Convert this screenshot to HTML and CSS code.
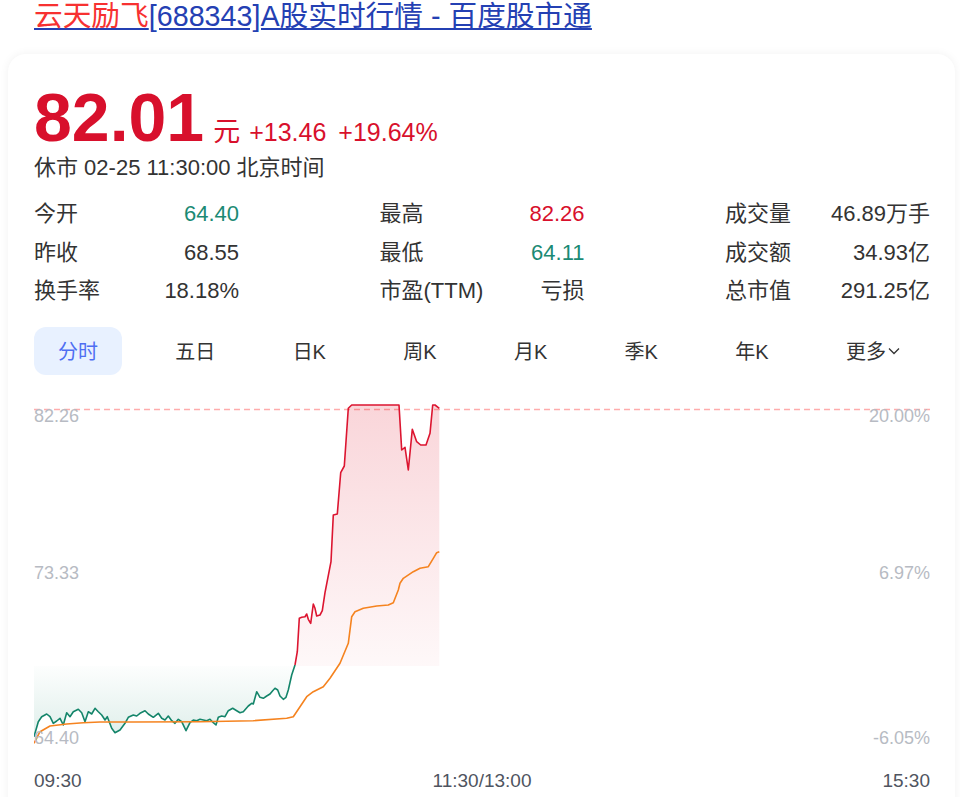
FILE: index.html
```html
<!DOCTYPE html>
<html lang="zh-CN">
<head>
    <meta charset="UTF-8">
    <meta name="viewport" content="width=device-width, initial-scale=1.0">
    <title>云天励飞[688343]A股实时行情 - 百度股市通</title>
    <link rel="stylesheet" href="styles.css">
</head>
<body>
    <h1 class="page-title">
        <a href="#"><span class="hl">云天励飞</span>[688343]A股实时行情 - 百度股市通</a>
    </h1>

    <div class="quote-card">
        <div class="price-row">
            <span class="price">82.01</span>
            <span class="unit">元</span>
            <span class="change">+13.46</span>
            <span class="change pct">+19.64%</span>
        </div>
        <div class="status">休市 02-25 11:30:00 北京时间</div>

        <div class="stats">
            <div class="stat"><span>今开</span><span class="down">64.40</span></div>
            <div class="stat"><span>最高</span><span class="up">82.26</span></div>
            <div class="stat"><span>成交量</span><span>46.89万手</span></div>
            <div class="stat"><span>昨收</span><span>68.55</span></div>
            <div class="stat"><span>最低</span><span class="down">64.11</span></div>
            <div class="stat"><span>成交额</span><span>34.93亿</span></div>
            <div class="stat"><span>换手率</span><span>18.18%</span></div>
            <div class="stat"><span>市盈(TTM)</span><span>亏损</span></div>
            <div class="stat"><span>总市值</span><span>291.25亿</span></div>
        </div>

        <div class="tabs">
            <div class="tab active">分时</div>
            <div class="tab">五日</div>
            <div class="tab">日K</div>
            <div class="tab">周K</div>
            <div class="tab">月K</div>
            <div class="tab">季K</div>
            <div class="tab">年K</div>
            <div class="tab more">更多<svg width="12" height="8" viewBox="0 0 12 8"><path d="M1 1.5 L6 6.5 L11 1.5" fill="none" stroke="#333" stroke-width="1.3"/></svg></div>
        </div>

        <div class="chart">
            <svg width="896" height="410" viewBox="0 0 896 410">
                <defs>
                    <linearGradient id="upFill" gradientUnits="userSpaceOnUse" x1="0" y1="15" x2="0" y2="276">
                        <stop offset="0" stop-color="#e0182f" stop-opacity="0.18"/>
                        <stop offset="1" stop-color="#e0182f" stop-opacity="0.03"/>
                    </linearGradient>
                    <linearGradient id="downFill" gradientUnits="userSpaceOnUse" x1="0" y1="276" x2="0" y2="346">
                        <stop offset="0" stop-color="#1b8a6e" stop-opacity="0.01"/>
                        <stop offset="1" stop-color="#1b8a6e" stop-opacity="0.14"/>
                    </linearGradient>
                </defs>

                <!-- limit-up line -->
                <line x1="0" y1="19.5" x2="896" y2="19.5" stroke="#ffacac" stroke-width="1.5" stroke-dasharray="6 4"/>

                <!-- fills against previous close -->
                <polygon fill="url(#downFill)" points="0,276 0,346.7 4.3,331.7 7.7,326.7 12.7,324 16,326.7 19.3,333.3 22.7,331 26,328.3 29.3,335 32.7,322.7 36,326.7 39.3,321.7 44.3,319.3 47.7,322.7 51,331.7 54.3,321.7 57.7,324 61,318.3 64.3,321.7 67.7,325 71,330 73.3,326.7 77.7,338.3 81,342.7 86,340 91,333.3 94.3,327.3 99.3,325 102.7,326 106,323.3 111,320.7 114.3,324 119.3,327.3 124.3,323.3 127.7,328.3 131,330 134.3,326 137.7,330.7 141,333.3 144.3,329.3 147.7,331.7 152,340.7 156,332.7 159.3,330 162.7,330.7 166,329.3 169.3,330 172.7,330.7 176,329.3 179.3,332.7 182,335 184.3,327.3 187.7,326 191,326.7 194.3,320.7 198.7,318.3 202.7,320.7 206,322.7 209.3,321.7 214.3,316 217.7,313.3 219.3,314 222.7,301.7 226,307.3 229.3,308.3 232.7,306 236,304 238.7,300.7 241,298.3 243.7,300 246,306 249.3,309.3 252,307.3 254.3,300 257.7,285 261,276"/>
                <polygon fill="url(#upFill)" points="261,276 263.3,261.7 265.3,228.3 267.7,227.3 271,226.7 272.7,224 274.3,229.3 276.7,233.3 279.3,214 281,218.3 282.7,226 286,225 288.3,220.7 291,202.7 297,171.7 299.3,125 303.3,124 306.7,82.7 310.3,76 314.3,18.3 317.7,15 365,15 367.7,60 371,57.3 374.3,80 378.3,39.3 382.7,51.7 386.7,55 392,55 396,43.3 398.7,15 401,15 405.3,18.3 405.3,276"/>

                <!-- price line -->
                <polyline fill="none" stroke="#14856a" stroke-width="1.6" stroke-linejoin="round" points="0,346.7 4.3,331.7 7.7,326.7 12.7,324 16,326.7 19.3,333.3 22.7,331 26,328.3 29.3,335 32.7,322.7 36,326.7 39.3,321.7 44.3,319.3 47.7,322.7 51,331.7 54.3,321.7 57.7,324 61,318.3 64.3,321.7 67.7,325 71,330 73.3,326.7 77.7,338.3 81,342.7 86,340 91,333.3 94.3,327.3 99.3,325 102.7,326 106,323.3 111,320.7 114.3,324 119.3,327.3 124.3,323.3 127.7,328.3 131,330 134.3,326 137.7,330.7 141,333.3 144.3,329.3 147.7,331.7 152,340.7 156,332.7 159.3,330 162.7,330.7 166,329.3 169.3,330 172.7,330.7 176,329.3 179.3,332.7 182,335 184.3,327.3 187.7,326 191,326.7 194.3,320.7 198.7,318.3 202.7,320.7 206,322.7 209.3,321.7 214.3,316 217.7,313.3 219.3,314 222.7,301.7 226,307.3 229.3,308.3 232.7,306 236,304 238.7,300.7 241,298.3 243.7,300 246,306 249.3,309.3 252,307.3 254.3,300 257.7,285 261,275"/>
                <polyline fill="none" stroke="#dc1530" stroke-width="1.6" stroke-linejoin="round" points="261,275 263.3,261.7 265.3,228.3 267.7,227.3 271,226.7 272.7,224 274.3,229.3 276.7,233.3 279.3,214 281,218.3 282.7,226 286,225 288.3,220.7 291,202.7 297,171.7 299.3,125 303.3,124 306.7,82.7 310.3,76 314.3,18.3 317.7,15 365,15 367.7,60 371,57.3 374.3,80 378.3,39.3 382.7,51.7 386.7,55 392,55 396,43.3 398.7,15 401,15 405.3,18.3"/>

                <!-- average line -->
                <polyline fill="none" stroke="#f5831f" stroke-width="1.6" stroke-linejoin="round" points="0,353.3 6,341.7 16,336 32.7,334 49.3,332.7 66,332 99.3,332 166,331.7 219.3,330.7 252.7,328.3 259.3,326.7 266,316.7 272.7,306.7 279.3,301.7 289.3,296.7 296,288.3 306,273.3 314.3,253.3 317.7,226.7 321,221.7 329.3,218.3 342.7,216 354.3,215 359.3,212.7 364.3,200 366,193.3 369.3,188.3 379.3,181.7 386,178.3 394.3,176.7 399.3,168.3 402.7,162.7 405.3,161.7"/>

                <!-- axis labels -->
                <g class="axis-y">
                    <text x="0" y="32">82.26</text>
                    <text x="0" y="189">73.33</text>
                    <text x="0" y="354">64.40</text>
                    <text x="896" y="32" text-anchor="end">20.00%</text>
                    <text x="896" y="189" text-anchor="end">6.97%</text>
                    <text x="896" y="354" text-anchor="end">-6.05%</text>
                </g>
                <g class="axis-x">
                    <text x="0" y="397">09:30</text>
                    <text x="448" y="397" text-anchor="middle">11:30/13:00</text>
                    <text x="896" y="397" text-anchor="end">15:30</text>
                </g>
            </svg>
        </div>
    </div>
</body>
</html>
```

FILE: styles.css
```css
body {
    margin: 0;
    padding: 0 5px 0 8px;
    background-color: #fff;
    font-family: "Liberation Sans", Arial, "Noto Sans CJK SC", sans-serif;
    color: #333;
}

.page-title {
    margin: 0;
    padding: 0 0 0 26px;
    font-size: 28.7px;
    font-weight: normal;
    line-height: 32px;
}

.page-title a {
    color: #2440b3;
    text-decoration: underline;
}

.page-title .hl {
    color: #f73131;
}

.quote-card {
    margin-top: 22px;
    padding: 30px 25px 0 26px;
    background-color: #fff;
    border-radius: 18px;
    box-shadow: 0 0 10px rgba(0, 0, 0, 0.06);
    height: 760px;
}

.price-row {
    display: flex;
    align-items: baseline;
    height: 66px;
    color: #d8102c;
    line-height: 66px;
}

.price {
    font-size: 68px;
    font-weight: bold;
}

.unit {
    font-size: 27px;
    margin-left: 9px;
}

.change {
    font-size: 25px;
    margin-left: 9px;
}

.change.pct {
    margin-left: 12px;
}

.status {
    margin-top: 3px;
    font-size: 22px;
    line-height: 30px;
    color: #333;
}

.stats {
    display: grid;
    grid-template-columns: repeat(3, 205px);
    justify-content: space-between;
    margin-top: 12px;
}

.stat {
    display: flex;
    justify-content: space-between;
    font-size: 22px;
    line-height: 38.5px;
    color: #333;
}

.stat .up {
    color: #d8102c;
}

.stat .down {
    color: #1b8a74;
}

.tabs {
    display: flex;
    justify-content: space-between;
    align-items: center;
    margin-top: 16px;
}

.tab {
    height: 48px;
    padding: 0 24px;
    display: flex;
    align-items: center;
    font-size: 20px;
    color: #333;
    border-radius: 12px;
}

.tab.active {
    background-color: #e8f1ff;
    color: #4e6ef2;
}

.tab.more {
    padding-right: 30px;
}

.tab.more svg {
    margin-left: 2px;
}

.chart {
    margin-top: 15px;
    height: 410px;
}

.chart svg {
    display: block;
}

.axis-y text {
    font-size: 18px;
    fill: #b7bbc3;
}

.axis-x text {
    font-size: 19px;
    fill: #4f5460;
}
```
